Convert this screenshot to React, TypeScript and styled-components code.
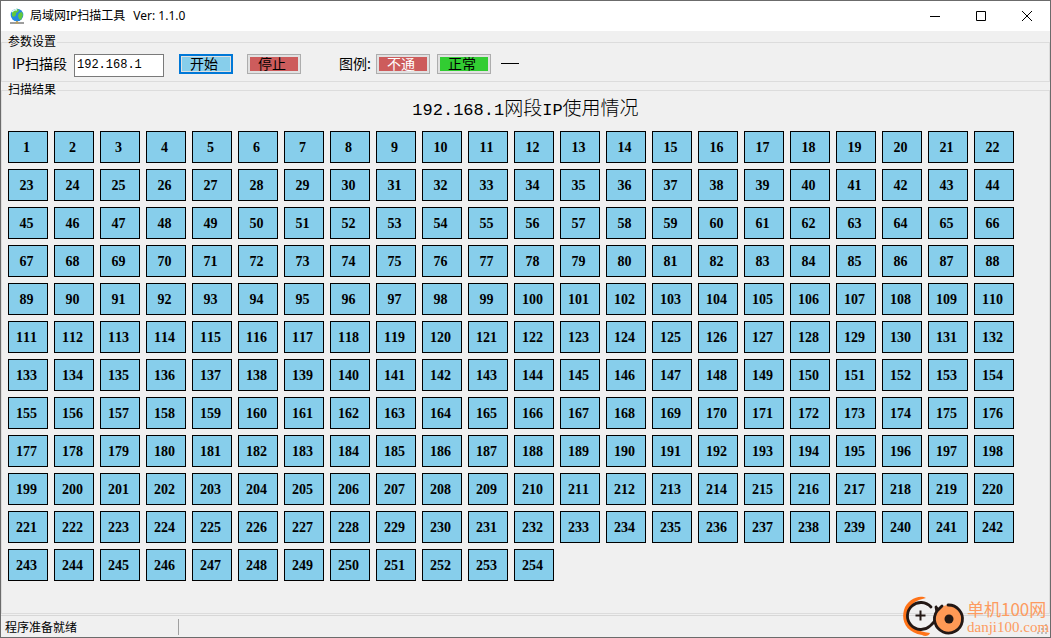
import React from 'react';
import styled, { createGlobalStyle } from 'styled-components';

const mono = '"Liberation Mono", "Noto Sans CJK SC", monospace';
const cjk = '"Noto Sans CJK SC", sans-serif';

const GlobalStyle = createGlobalStyle`
  *, *::before, *::after { box-sizing: border-box; }
  body { margin: 0; background: #f0f0f0; color: #000; font: 12px/16px "Noto Sans", ${cjk}; }
`;

const Window = styled.div`
  position: relative;
  display: flex;
  flex-direction: column;
  min-height: 100vh;
  border: 1px solid #6b6b6b;
  background: #f0f0f0;
`;

const TitleBar = styled.header`
  display: flex;
  align-items: center;
  height: 30px;
  padding-left: 8px;
  background: #fff;
`;

const WindowTitle = styled.h1`
  flex: 1;
  margin: 0 0 0 5px;
  font-size: 12px;
  font-weight: 400;
  line-height: 16px;

  span { margin-left: 8px; }
`;

const CaptionButton = styled.button`
  display: grid;
  place-items: center;
  width: 46px;
  height: 30px;
  padding: 0;
  border: 0;
  background: transparent;
`;

const Group = styled.fieldset<{ $grow?: boolean }>`
  flex: ${p => (p.$grow ? '1 0 auto' : 'none')};
  min-width: 0;
  margin: ${p => (p.$grow ? '2px 0 0' : '5px 0 0')};
  padding: 0 6px;
  border: 1px solid #dcdcdc;
`;

const GroupTitle = styled.legend`
  height: 13px;
  padding: 0 1px 0 0;
  font: 12px/10px ${cjk};
`;

const Settings = styled.form`
  display: flex;
  align-items: flex-start;
  padding: 5px 4px 4px;
`;

const FieldLabel = styled.label`
  width: 62px;
  font: 14px/18px ${cjk};
  white-space: nowrap;
`;

const SegmentInput = styled.input`
  width: 90px;
  height: 23px;
  padding: 0 2px 2px;
  border: 1px solid #7a7a7a;
  background: #fff;
  font: 12px/18px ${mono};
`;

const ActionButton = styled.button<{ $fill: string; $ink?: string; $active?: boolean }>`
  width: 54px;
  height: 20px;
  margin-left: ${p => (p.$active ? 15 : 14)}px;
  padding: ${p => (p.$active ? 0 : 1)}px;
  border: ${p => (p.$active ? '2px solid #0078d7' : '1px solid #adadad')};
  background: #e1e1e1;
  color: ${p => p.$ink || '#000'};
  font: 14px/12px ${cjk};

  span {
    display: block;
    height: 14px;
    margin: 0 1px;
    padding-right: 4px;
    background: ${p => p.$fill};
  }
`;

const Key = styled.div`
  display: flex;
  margin-left: 38px;
  font: 14px/18px ${cjk};

  > span { width: 37px; white-space: nowrap; }
  button { margin-left: 0; margin-right: 7px; }
`;

const Dash = styled.i`
  width: 18px;
  height: 1px;
  margin: 9px 0 0 3px;
  background: #000;
`;

const Caption = styled.h2`
  height: 22px;
  margin: 0 0 12px;
  font: 300 19px/20px ${cjk};
  text-align: center;

  span { font: 17px/20px ${mono}; }
`;

const HostGrid = styled.div`
  display: grid;
  grid-template-columns: repeat(auto-fill, 40px);
  gap: 6px;
  padding-bottom: 30px;
`;

const Host = styled.div`
  height: 32px;
  padding: 1px 3px 0 0;
  border: 1px solid #000;
  background: #87ceeb;
  font: 700 14px/29px "Liberation Serif", serif;
  font-kerning: none;
  text-align: center;
`;

const StatusBar = styled.footer`
  display: flex;
  align-items: center;
  height: 22px;
  margin-top: 1px;
  padding-left: 4px;
  border-top: 1px solid #d7d7d7;
  font: 12px/16px ${cjk};
`;

const StatusCell = styled.span`
  width: 174px;
  height: 16px;
  border-right: 1px solid #a0a0a0;
`;

const SizeGrip = styled.svg`
  margin: auto 1px 2px auto;
`;

const Watermark = styled.div`
  position: absolute;
  right: 0;
  bottom: 0;
  display: flex;
  align-items: flex-end;
  color: #fd9b60;
`;

const SiteName = styled.div`
  width: 83px;
  font: 17px/19px ${cjk};
  white-space: nowrap;

  small { display: block; font: 15px/19px "Liberation Serif", serif; }
`;

const hosts = Array.from({ length: 254 }, (_, i) => i + 1);

const Globe = () => (
  <svg width="16" height="17" viewBox="0 0 16 17" aria-hidden="true">
    <circle cx="8" cy="7" r="6.3" fill="#2589df" />
    <path d="M3 4Q5 1 8 .8L10 2 9 4 7 5 7 7 5 9 3 8zM10 5l3-1 1 3-2 5-2-1-1-3z" fill="#63c93c" />
    <path d="M3 4Q5 1 8 2" stroke="#d9f4ff" strokeWidth="1.4" fill="none" />
    <path d="M1 15h14" stroke="#858585" strokeWidth="1.6" />
    <path d="M6.500 15h3M8 13v1" stroke="#b5a06a" strokeWidth="2" />
  </svg>
);

const SiteLogo = () => (
  <svg width="65" height="42" viewBox="0 0 65 42" aria-hidden="true">
    <path d="M24 3C18-1 5 4 2 15S4 37 20 40c3 2 7 1 8-2C15 37 6 30 6 20S14 5 24 3Z" fill="#ff7318" />
    <path d="M29 12A13.500 13.500 0 1 0 28 31C33 27 37 21 34 12M34 12L38 17" fill="none" stroke="#231815" strokeWidth="2.800" strokeLinecap="round" />
    <path d="M13.500 20.500h10M18.500 15.500v10" stroke="#231815" strokeWidth="2" />
    <circle cx="47" cy="24" r="14" fill="#ff9955" />
    <path d="M46 10A14 14 0 1 1 35 16L40 11" fill="none" stroke="#231815" strokeWidth="2.800" strokeLinecap="round" />
    <circle cx="47" cy="24" r="4.500" fill="#231815" />
  </svg>
);

export default function App() {
  return (
    <>
      <GlobalStyle />
      <Window>
        <TitleBar>
          <Globe />
          <WindowTitle>局域网IP扫描工具<span>Ver: 1.1.0</span></WindowTitle>
          <CaptionButton aria-label="最小化"><svg width="10" height="10"><path d="M0 5.5h10" stroke="#000" /></svg></CaptionButton>
          <CaptionButton aria-label="最大化"><svg width="10" height="10"><path d="M.5.5h9v9h-9z" fill="none" stroke="#000" /></svg></CaptionButton>
          <CaptionButton aria-label="关闭"><svg width="10" height="10"><path d="M0 0l10 10M10 0L0 10" stroke="#000" /></svg></CaptionButton>
        </TitleBar>
        <Group>
          <GroupTitle>参数设置</GroupTitle>
          <Settings onSubmit={e => e.preventDefault()}>
            <FieldLabel htmlFor="segment">IP扫描段</FieldLabel>
            <SegmentInput id="segment" defaultValue="192.168.1" />
            <ActionButton type="button" $fill="#87ceeb" $active><span>开始</span></ActionButton>
            <ActionButton type="button" $fill="#cd5c5c"><span>停止</span></ActionButton>
            <Key>
              <span>图例:</span>
              <ActionButton type="button" $fill="#cd5c5c" $ink="#fff"><span>不通</span></ActionButton>
              <ActionButton type="button" $fill="#32cd32"><span>正常</span></ActionButton>
              <Dash />
            </Key>
          </Settings>
        </Group>
        <Group $grow>
          <GroupTitle>扫描结果</GroupTitle>
          <Caption><span>192.168.1</span>网段<span>IP</span>使用情况</Caption>
          <HostGrid>{hosts.map(n => <Host key={n}>{n}</Host>)}</HostGrid>
        </Group>
        <StatusBar>
          <StatusCell>程序准备就绪</StatusCell>
          <SizeGrip width="12" height="12" aria-hidden="true">
            <path d="M8 1h2v2H8zM4 5h2v2H4zM8 5h2v2H8zM0 9h2v2H0zM4 9h2v2H4zM8 9h2v2H8z" fill="#bfbfbf" />
          </SizeGrip>
        </StatusBar>
        <Watermark>
          <SiteLogo />
          <SiteName>单机100网<small>danji100.com</small></SiteName>
        </Watermark>
      </Window>
    </>
  );
}
